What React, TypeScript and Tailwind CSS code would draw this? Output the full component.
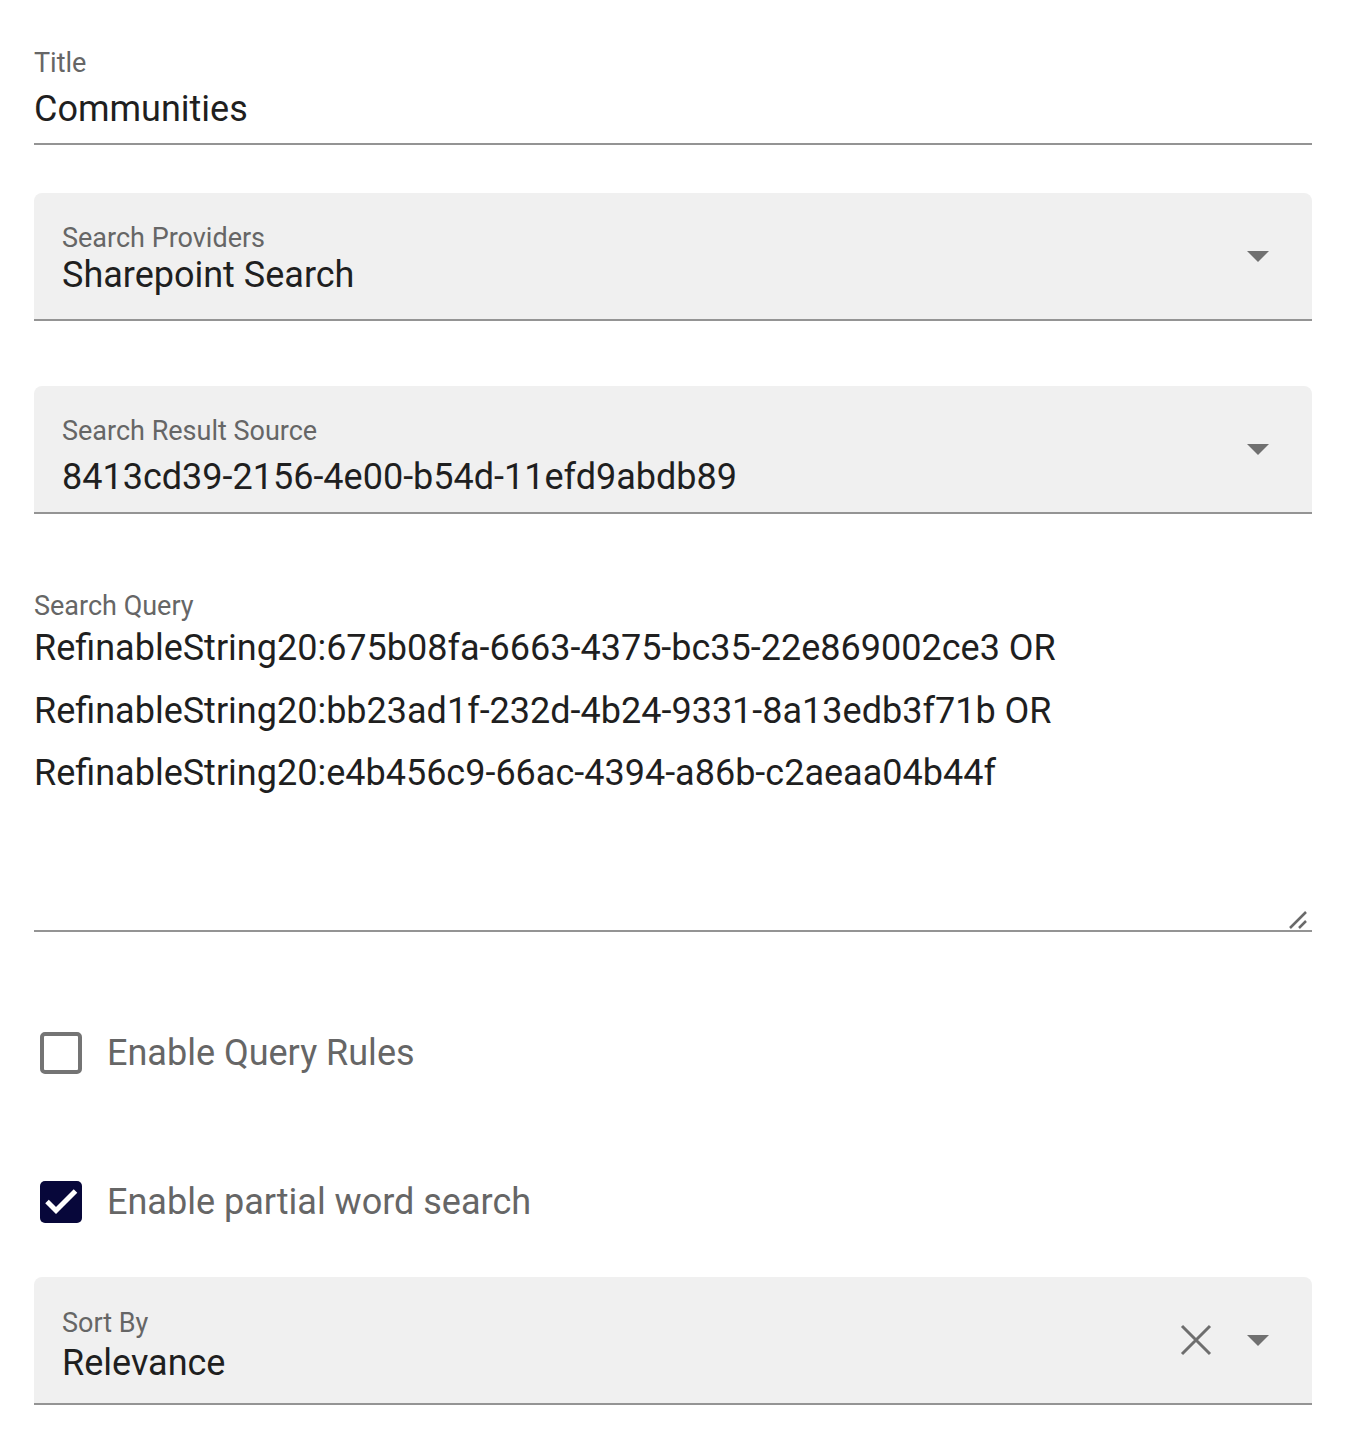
import React from 'react';

const Arrow: React.FC = () => (
  <svg width="22" height="11" viewBox="0 0 22 11" className="shrink-0">
    <path d="M0 0 L22 0 L11 11 Z" fill="#707070" />
  </svg>
);

const SelectField: React.FC<{
  label: string;
  value: string;
  clearable?: boolean;
  className?: string;
  textClass?: string;
  valueClass?: string;
}> = ({ label, value, clearable, className = '', textClass = 'pt-[30px]', valueClass = 'mt-[1px]' }) => (
  <div
    className={`h-[128px] bg-[#f0f0f0] rounded-t-[8px] border-b-2 border-[#949494] flex items-center pl-[28px] pr-[43px] ${className}`}
  >
    <div className={`flex-1 self-start flex flex-col ${textClass}`}>
      <span className="text-[27px] leading-[28px] text-[#666666]">{label}</span>
      <span className={`text-[36px] leading-[44px] text-[#1f1f1f] ${valueClass}`}>{value}</span>
    </div>
    {clearable && (
      <svg width="32" height="32" viewBox="0 0 32 32" className="mr-[35px]">
        <path d="M2 2 L30 30 M30 2 L2 30" stroke="#6e6e6e" strokeWidth="3" />
      </svg>
    )}
    <Arrow />
  </div>
);

const Checkbox: React.FC<{ checked?: boolean; label: string; className?: string }> = ({
  checked,
  label,
  className = '',
}) => (
  <div className={`flex items-center pl-[6px] ${className}`}>
    {checked ? (
      <div className="w-[42px] h-[42px] rounded-[5px] bg-[#07073a]">
        <svg width="42" height="42" viewBox="0 0 42 42">
          <path d="M7 20.5 L16 29.5 L35.5 10" stroke="#ffffff" strokeWidth="5" fill="none" />
        </svg>
      </div>
    ) : (
      <div className="w-[42px] h-[42px] rounded-[5px] border-4 border-[#747474]" />
    )}
    <span className="ml-[25px] text-[36px] leading-[44px] text-[#666666]">{label}</span>
  </div>
);

export default function App() {
  const query = [
    'RefinableString20:675b08fa-6663-4375-bc35-22e869002ce3 OR',
    'RefinableString20:bb23ad1f-232d-4b24-9331-8a13edb3f71b OR',
    'RefinableString20:e4b456c9-66ac-4394-a86b-c2aeaa04b44f',
  ];

  return (
    <div className="w-[1347px] min-h-[1442px] bg-white pl-[34px] pt-[49px] pr-[35px] font-['Roboto',sans-serif]">
      {/* Title */}
      <div className="flex flex-col">
        <span className="text-[27px] leading-[28px] text-[#666666]">Title</span>
        <span className="text-[36px] leading-[40px] text-[#1f1f1f] mt-[12px]">Communities</span>
        <div className="h-[2px] bg-[#949494] mt-[14px]" />
      </div>

      <SelectField className="mt-[48px]" textClass="pt-[31px]" label="Search Providers" value="Sharepoint Search" />
      <SelectField
        className="mt-[65px]"
        textClass="pt-[31px]"
        valueClass="mt-[10px]"
        label="Search Result Source"
        value="8413cd39-2156-4e00-b54d-11efd9abdb89"
      />

      {/* Search Query */}
      <div className="mt-[78px] flex flex-col">
        <span className="text-[27px] leading-[28px] text-[#666666]">Search Query</span>
        <div className="relative h-[315px] border-b-2 border-[#949494] mt-[-3px]">
          {query.map((line, i) => (
            <div key={i} className="text-[36px] leading-[62.5px] text-[#1f1f1f] whitespace-nowrap">
              {line}
            </div>
          ))}
          <svg width="22" height="22" viewBox="0 0 22 22" className="absolute right-[2px] bottom-[0px]">
            <path d="M2 20 L18 4 M11 20 L18 13" stroke="#6a6a6a" strokeWidth="2.5" />
          </svg>
        </div>
      </div>

      <Checkbox className="mt-[99px]" label="Enable Query Rules" />
      <Checkbox className="mt-[105px]" checked label="Enable partial word search" />

      <SelectField
        className="mt-[53px]"
        textClass="pt-[32px]"
        valueClass="mt-[4px]"
        label="Sort By"
        value="Relevance"
        clearable
      />
    </div>
  );
}
